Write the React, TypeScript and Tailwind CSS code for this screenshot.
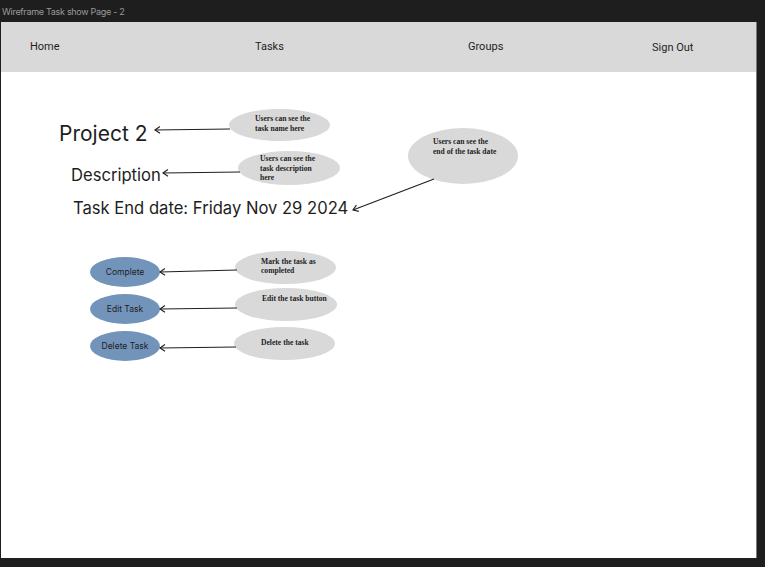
import React from "react";

type Arrow = { x1: number; y1: number; x2: number; y2: number };

const arrows: Arrow[] = [
  { x1: 229, y1: 57, x2: 154, y2: 58 },
  { x1: 239, y1: 100, x2: 162, y2: 101 },
  { x1: 433, y1: 107, x2: 352, y2: 138 },
  { x1: 236, y1: 198, x2: 159, y2: 200 },
  { x1: 236, y1: 236, x2: 159, y2: 237 },
  { x1: 235, y1: 275, x2: 159, y2: 276 },
];

function head(a: Arrow) {
  const ang = Math.atan2(a.y1 - a.y2, a.x1 - a.x2);
  const len = 6;
  const spread = 0.6;
  const p1x = a.x2 + len * Math.cos(ang + spread);
  const p1y = a.y2 + len * Math.sin(ang + spread);
  const p2x = a.x2 + len * Math.cos(ang - spread);
  const p2y = a.y2 + len * Math.sin(ang - spread);
  return `M${p1x} ${p1y} L${a.x2} ${a.y2} L${p2x} ${p2y}`;
}

const note = "font-['Liberation_Serif',serif] font-bold text-[7.6px] text-[#1e1e1e] whitespace-nowrap";
const btn = "w-[70px] h-[30px] rounded-[50%] bg-[#7394ba] flex items-center justify-center text-[8.5px]";

export default function App() {
  return (
    <div className="w-[765px] h-[567px] bg-[#1e1e1e] flex flex-col overflow-hidden">
      <div className="h-[22px] flex items-center pl-[2px] font-['Inter',sans-serif] text-[9px] tracking-[-0.3px] text-[#9a9a9a] leading-none">
        Wireframe Task show Page - 2
      </div>
      <div className="ml-[1px] w-[756px] h-[536px] bg-white flex flex-col border-r border-[#7a7a7a]">
        <nav className="h-[50px] bg-[#d9d9d9] flex items-center pl-[29px] pt-[1px] font-['Roboto',sans-serif] text-[11px] text-[#1e1e1e]">
          <div className="w-[225px]">Home</div>
          <div className="w-[213px]">Tasks</div>
          <div className="w-[184px]">Groups</div>
          <div className="pt-[1px]">Sign Out</div>
        </nav>
        <div className="relative flex-1 font-['Inter',sans-serif] text-[#1e1e1e]">
          <div className="flex flex-col items-start pt-[49px]">
            <div className="ml-[58px] text-[21px] leading-[26px]">Project 2</div>
            <div className="ml-[70px] mt-[17px] text-[16.6px] leading-[22px]">Description</div>
            <div className="ml-[72px] mt-[11px] text-[16.6px] leading-[22px]">Task End date: Friday Nov 29 2024</div>
            <div className="ml-[89px] mt-[38px] flex flex-col gap-[7px]">
              <div className={btn}>Complete</div>
              <div className={btn}>Edit Task</div>
              <div className={btn}>Delete Task</div>
            </div>
          </div>

          <div className="absolute left-[228px] top-[37px] w-[101px] h-[32px] rounded-[50%] bg-[#d9d9d9]">
            <div className={`absolute left-[26px] top-[5px] leading-[10px] ${note}`}>
              Users can see the<br />task name here
            </div>
          </div>
          <div className="absolute left-[237px] top-[79px] w-[102px] h-[34px] rounded-[50%] bg-[#d9d9d9]">
            <div className={`absolute left-[22px] top-[3px] leading-[9.5px] ${note}`}>
              Users can see the<br />task description<br />here
            </div>
          </div>
          <div className="absolute left-[407px] top-[56px] w-[110px] h-[56px] rounded-[50%] bg-[#d9d9d9]">
            <div className={`absolute left-[25px] top-[9px] leading-[10px] ${note}`}>
              Users can see the<br />end of the task date
            </div>
          </div>

          <div className="absolute left-[234px] top-[179px] w-[101px] h-[33px] rounded-[50%] bg-[#d9d9d9]">
            <div className={`absolute left-[26px] top-[6px] leading-[9px] ${note}`}>
              Mark the task as<br />completed
            </div>
          </div>
          <div className="absolute left-[234px] top-[216px] w-[102px] h-[33px] rounded-[50%] bg-[#d9d9d9]">
            <div className={`absolute left-[27px] top-[6px] leading-[10px] ${note}`}>Edit the task button</div>
          </div>
          <div className="absolute left-[233px] top-[255px] w-[101px] h-[33px] rounded-[50%] bg-[#d9d9d9]">
            <div className={`absolute left-[27px] top-[11px] leading-[10px] ${note}`}>Delete the task</div>
          </div>

          <svg className="absolute inset-0 pointer-events-none" width="755" height="486">
            {arrows.map((a, i) => (
              <g key={i} stroke="#1e1e1e" strokeWidth="1.1" fill="none">
                <line x1={a.x1} y1={a.y1} x2={a.x2} y2={a.y2} />
                <path d={head(a)} />
              </g>
            ))}
          </svg>
        </div>
      </div>
    </div>
  );
}
